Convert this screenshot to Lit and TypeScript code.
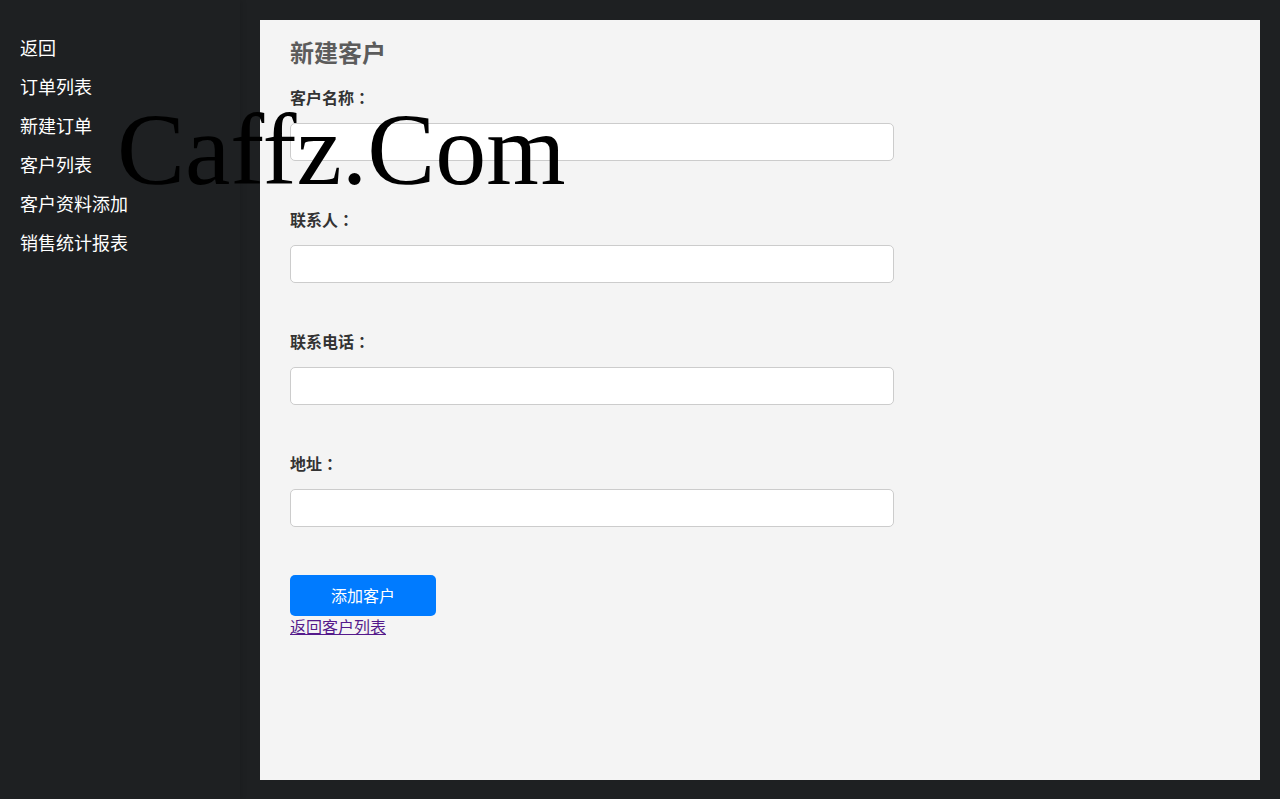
import { LitElement, html, css } from "lit";
import { customElement } from "lit/decorators.js";

const MENU = ["返回", "订单列表", "新建订单", "客户列表", "客户资料添加", "销售统计报表"];

const FIELDS = [
  { id: "name", label: "客户名称" },
  { id: "contact", label: "联系人" },
  { id: "phone", label: "联系电话" },
  { id: "address", label: "地址" },
];

@customElement("app-root")
export class AppRoot extends LitElement {
  static styles = css`
    :host {
      display: flex;
      position: relative;
      min-height: 100vh;
      box-sizing: border-box;
      background: #1e2022;
      font-family: "Noto Sans CJK SC", "Noto Sans", sans-serif;
      font-size: 16px;
      color: #333;
    }
    .sidebar {
      flex: 0 0 240px;
      box-sizing: border-box;
      padding: 35px 20px 20px;
      background: #1e2022;
      box-shadow: 2px 0 5px rgba(0, 0, 0, 0.1);
    }
    .menu {
      display: grid;
      gap: 15px;
      margin: 0;
      padding: 0;
      list-style: none;
    }
    .menu a {
      display: block;
      font-size: 18px;
      line-height: 24px;
      color: #fff;
      text-decoration: none;
    }
    .panel {
      flex: 1;
      min-width: 0;
      box-sizing: border-box;
      margin: 20px 20px 19px;
      padding: 16px 0 30px 30px;
      background: #f4f4f4;
    }
    .title {
      margin: 0 0 19px;
      font-size: 24px;
      line-height: 32px;
      font-weight: 700;
      color: #5c5c5c;
    }
    .field {
      margin-bottom: 48px;
    }
    .field label {
      display: block;
      margin-bottom: 16px;
      line-height: 20px;
      font-weight: 700;
    }
    .colon {
      font-family: "Noto Sans CJK TC", sans-serif;
      line-height: 1;
    }
    .field input {
      display: block;
      box-sizing: content-box;
      width: 60%;
      height: 16px;
      margin: 0;
      padding: 10px;
      border: 1px solid #ccc;
      border-radius: 5px;
      background: #fff;
      font: inherit;
      line-height: 16px;
    }
    .submit {
      display: block;
      margin: 0;
      padding: 10px 41px;
      border: 0;
      border-radius: 5px;
      background: #007bff;
      color: #fff;
      font: inherit;
      line-height: 21px;
      cursor: pointer;
    }
    .back {
      display: block;
      width: fit-content;
      line-height: 20px;
      color: #551a8b;
    }
    .watermark {
      position: absolute;
      left: 117px;
      top: 100px;
      font-family: "Liberation Serif", serif;
      font-size: 102px;
      line-height: 100px;
      color: #000;
      pointer-events: none;
    }
  `;

  render() {
    return html`
      <nav class="sidebar">
        <ul class="menu">
          ${MENU.map((item) => html`<li><a href="#">${item}</a></li>`)}
        </ul>
      </nav>
      <main class="panel">
        <h2 class="title">新建客户</h2>
        <form @submit=${(e: Event) => e.preventDefault()}>
          ${FIELDS.map(
            (f) => html`
              <div class="field">
                <label for=${f.id}>${f.label}<span class="colon">：</span></label>
                <input type="text" id=${f.id} name=${f.id} />
              </div>
            `
          )}
          <button class="submit" type="submit">添加客户</button>
        </form>
        <a class="back" href="#">返回客户列表</a>
      </main>
      <div class="watermark">Caffz.Com</div>
    `;
  }
}
